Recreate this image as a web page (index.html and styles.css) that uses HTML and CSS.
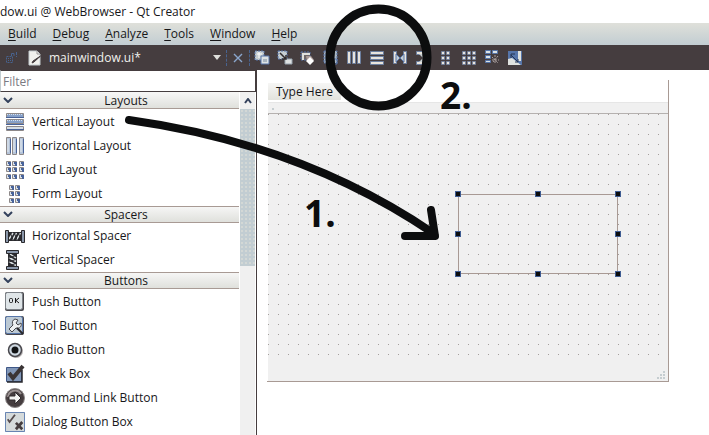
FILE: index.html
```html
<!DOCTYPE html>
<html lang="en">
<head>
<meta charset="utf-8">
<title>mainwindow.ui @ WebBrowser - Qt Creator</title>
<link rel="stylesheet" href="styles.css">
</head>
<body>
<div class="app">
  <header class="titlebar">dow.ui @ WebBrowser - Qt Creator</header>
  <nav class="menubar">
    <button><u>B</u>uild</button><button><u>D</u>ebug</button><button><u>A</u>nalyze</button><button><u>T</u>ools</button><button><u>W</u>indow</button><button><u>H</u>elp</button>
  </nav>
  <div class="toolbar">
    <button class="lock" aria-label="Lock"><svg width="14" height="14" viewBox="0 0 14 14" fill="none" stroke="#48638f"><rect x="1.500" y="5.500" width="6" height="6" stroke-dasharray="2 1"/><path d="M3 7.500h3M3 9.500h3" stroke-dasharray="1 1"/><path d="M6.500 5V2.500H9V5M11.500 1v3M11.500 5v1" /></svg></button>
    <svg class="file" width="14" height="16" viewBox="0 0 14 16"><path d="M1 1h8l3 3v11H1z" fill="#f1f1ed" stroke="#c5cdd0"/><path d="M9 1v3h3" fill="none" stroke="#9b9696"/><path d="M12.500 6L6 12l-2 1 1-2z" fill="#453d3f" stroke="#453d3f"/></svg>
    <select class="document" aria-label="Open document"><option>mainwindow.ui*</option></select>
    <svg class="caret" width="8" height="5" viewBox="0 0 8 5"><path d="M0 0h8L4 5z" fill="#dfe0dc"/></svg>
    <button class="close" aria-label="Close document"><svg width="10" height="10" viewBox="0 0 10 10"><path d="M1 1l8 8M9 1L1 9" stroke="#8aa6cc" stroke-width="1.400"/></svg></button>
    <div class="tools">
      <button aria-label="Edit widgets"><svg viewBox="0 0 16 16"><path d="M1 1h9v9H1z" fill="#c5cdd0" stroke="#5675a9" stroke-dasharray="2 1"/><path d="M3 4h5M5 2v6" stroke="#fff"/><path d="M7 6h8v8H7z" fill="#dce2e4" stroke="#5675a9"/><path d="M9 9h4v3H9z" fill="#a9b5c0"/></svg></button>
      <button aria-label="Edit signals"><svg viewBox="0 0 16 16"><path d="M1 1h9v8H1z" fill="#c5cdd0" stroke="#5675a9" stroke-dasharray="2 1"/><path d="M8 9h7v5H8z" fill="#dfe2e2" stroke="#97a3ae"/><path d="M3 3l6 6M9 5v4H5" fill="none" stroke="#302b2d" stroke-width="1.500"/></svg></button>
      <button aria-label="Edit buddies"><svg viewBox="0 0 16 16"><path d="M1 2h9v8H1z" fill="#6d6667" stroke="#5675a9" stroke-dasharray="2 1"/><path d="M2 4h8M3 3v7" stroke="#dfe0dc" stroke-width="2"/><path d="M6 6h5l3 4-4 4-3-3z" fill="#a89a98"/><path d="M10 7l4 4-4 4-4-4z" fill="#fff"/></svg></button>
      <button aria-label="Edit tab order"><svg viewBox="0 0 16 16"><path d="M1 1h13v12H1z" fill="#aab7c3" stroke="#5675a9" stroke-dasharray="2 1"/><path d="M3 3v8h8M11 9h3v5h-3z" fill="none" stroke="#5675a9"/></svg></button>
      <button aria-label="Lay out horizontally"><svg viewBox="0 0 16 16"><g fill="#e8e4dd" stroke="#6c7f9f"><path d="M1.500 1.500h3v12h-3zM6.500 1.500h3v12h-3zM11.500 1.500h3v12h-3z"/></g></svg></button>
      <button aria-label="Lay out vertically"><svg viewBox="0 0 16 16"><g fill="#e8e4dd" stroke="#6c7f9f"><path d="M1.500 1.500h13v3h-13zM1.500 6.500h13v3h-13zM1.500 11.500h13v3h-13z"/></g></svg></button>
      <button aria-label="Lay out horizontally in splitter"><svg viewBox="0 0 16 16"><path d="M1.500 1.500h3v12h-3zM11.500 1.500h3v12h-3z" fill="#e8e4dd" stroke="#6c7f9f"/><path d="M4 4l4 4-4 4zM12 4L8 8l4 4z" fill="#c5cdd0" stroke="#5675a9"/></svg></button>
      <button aria-label="Lay out vertically in splitter"><svg viewBox="0 0 16 16"><path d="M1.500 1.500h12v3h-12zM1.500 11.500h12v3h-12z" fill="#e8e4dd" stroke="#6c7f9f"/><path d="M4 4l4 4-4 4h8L8 8l4-4z" fill="#c5cdd0"/></svg></button>
      <button aria-label="Lay out in a form"><svg viewBox="0 0 16 16"><g fill="#e8e4dd" stroke="#6c7f9f" stroke-width=".8"><path d="M3.500 1.500h3v3h-3zM8.500 1.500h3v3h-3zM3.500 6.500h3v3h-3zM8.500 6.500h3v3h-3zM3.500 11.500h3v3h-3zM8.500 11.500h3v3h-3z"/></g></svg></button>
      <button aria-label="Lay out in a grid"><svg viewBox="0 0 16 16"><g fill="#e8e4dd" stroke="#6c7f9f" stroke-width=".8"><path d="M1.500 1.500h3v3h-3zM6.500 1.500h3v3h-3zM11.500 1.500h3v3h-3zM1.500 6.500h3v3h-3zM6.500 6.500h3v3h-3zM11.500 6.500h3v3h-3zM1.500 11.500h3v3h-3zM6.500 11.500h3v3h-3zM11.500 11.500h3v3h-3z"/></g></svg></button>
      <button aria-label="Break layout"><svg viewBox="0 0 16 16"><path d="M1.500.5h5v3h-5zM8.500.5h5v3h-5zM1.500 5.500h5v3h-5zM1.500 10.500h5v2h-5z" fill="#dce2e4" stroke="#5675a9"/><path d="M8 7l6 6M14 6l-5 6M8 10h7M11 5v8" stroke="#aaa09f" stroke-dasharray="2 1"/></svg></button>
      <button aria-label="Adjust size"><svg viewBox="0 0 16 16"><path d="M1 1h14v14H1z" fill="#5675a9"/><path d="M11 1h3v10h-3zM1 9l4-1 9 7H1z" fill="#dfe2df"/><path d="M4 5l7 7M4 8V4h4M11 9v3H8" stroke="#253452" fill="none"/></svg></button>
    </div>
  </div>
  <main class="workspace">
    <aside class="widgetbox">
      <input class="filter" type="text" placeholder="Filter" aria-label="Filter">
      <div class="scroller">
        <div class="list">
          <section>
            <h2><svg class="chev" viewBox="0 0 10 6"><path d="M1 1l4 4 4-4"/></svg>Layouts</h2>
            <ul>
              <li><svg viewBox="0 0 20 20"><g fill="#86a0c8" stroke="#8d8888"><path d="M1.500 1.500h17v4h-17z"/><path d="M1.500 7.500h17v4h-17z"/><path d="M1.500 14.500h17v4h-17z" fill="#d5dde5"/></g><path d="M2 2.500h16M2 8.500h16" stroke="#d8e1ea" stroke-dasharray="1 1"/><path d="M1 5.500h18M1 12.500h18M2 17.500h17" stroke="#48639a"/></svg>Vertical Layout</li>
              <li><svg viewBox="0 0 20 20"><g fill="#b5c4d9" stroke="#8d8888"><path d="M1.500 1.500h4v17h-4zM7.500 1.500h4v17h-4zM14.500 1.500h4v17h-4z"/></g><path d="M3 3v13M9 3v13M16 3v13" stroke="#e8eef2"/><path d="M5.500 3v14M11.500 3v14M18.500 3v14" stroke="#48639a"/></svg>Horizontal Layout</li>
              <li><svg viewBox="0 0 20 20"><g fill="#dbe3eb" stroke="#8d8888"><path id="r3" d="M1.500 1.500h4v4h-4zM7.500 1.500h4v4h-4zM14.500 1.500h4v4h-4z"/><use href="#r3" y="6"/><use href="#r3" y="13"/></g><g fill="#48639a"><path id="b3" d="M3 2h3v4H4V4H3zM9 2h3v4h-2V4H9zM16 2h3v4h-2V4h-1z"/><use href="#b3" y="6"/><use href="#b3" y="13"/></g></svg>Grid Layout</li>
              <li><svg viewBox="0 0 20 20"><g fill="#dbe3eb" stroke="#8d8888"><path id="r2" d="M4.500 1.500h4v4h-4zM10.500 1.500h4v4h-4z"/><use href="#r2" y="6"/><use href="#r2" y="13"/></g><g fill="#48639a"><path id="b2" d="M6 2h3v4H7V4H6zM12 2h3v4h-2V4h-1z"/><use href="#b2" y="6"/><use href="#b2" y="13"/></g></svg>Form Layout</li>
            </ul>
          </section>
          <section>
            <h2><svg class="chev" viewBox="0 0 10 6"><path d="M1 1l4 4 4-4"/></svg>Spacers</h2>
            <ul>
              <li><svg viewBox="0 0 20 20"><g id="spring"><path d="M3 6h14v9H3z" fill="#29292d"/><path d="M4 13l4-6M7.500 14l4-7M11.500 14l4-7" stroke="#dce2e4" stroke-width="1.500"/><path d="M5 6l3 8M9 6l3 8M13 6l3 8" stroke="#29292d"/><path d="M.5 4.500h3v12h-3zM16.500 4.500h3v12h-3z" fill="#8a97aa" stroke="#29292d"/></g></svg>Horizontal Spacer</li>
              <li><svg viewBox="0 0 20 20"><use href="#spring" transform="translate(-2 0) rotate(90 10 10)"/></svg>Vertical Spacer</li>
            </ul>
          </section>
          <section>
            <h2><svg class="chev" viewBox="0 0 10 6"><path d="M1 1l4 4 4-4"/></svg>Buttons</h2>
            <ul>
              <li><svg viewBox="0 0 20 20"><rect x="0" y="0" width="19" height="19" rx="2" fill="#48474c"/><rect x=".5" y=".5" width="17" height="17" rx="2" fill="#dfe5e8" stroke="#7c8187"/><rect x="4.500" y="6.500" width="3" height="4" rx="1" fill="none" stroke="#171719"/><path d="M10.500 6v5M14 6l-3 2.500L14 11" fill="none" stroke="#171719"/></svg>Push Button</li>
              <li><svg viewBox="0 0 20 20"><rect x="0" y="0" width="19" height="19" rx="2" fill="#48474c"/><rect x=".5" y=".5" width="17" height="17" rx="2" fill="#bcc9d4" stroke="#5675a9"/><path d="M10 3a4 4 0 0 0-2 6l-4 4 3 3 4-4c4 1 6-2 5-5l-3 2-2-2 2-3z" fill="#eef1f2" stroke="#48474c"/><path d="M12 12l6 6" stroke="#29292d" stroke-width="2"/></svg>Tool Button</li>
              <li><svg viewBox="0 0 20 20"><circle cx="11" cy="11" r="7" fill="#b5b0b0"/><circle cx="10" cy="10" r="6.500" fill="#cfd9e2" stroke="#48474c" stroke-width="1.500"/><circle cx="10" cy="10" r="3.500" fill="#111214"/></svg>Radio Button</li>
              <li><svg viewBox="0 0 20 20"><path d="M1.500 3.500h15v14h-15z" fill="#8197b8" stroke="#3e5787"/><path d="M2 18h15V6" fill="none" stroke="#28282c" stroke-width="1.500"/><path d="M4 9l4 5 10-12" fill="none" stroke="#3a3435" stroke-width="4"/></svg>Check Box</li>
              <li><svg viewBox="0 0 20 20"><circle cx="10" cy="10" r="9.500" fill="#453d3f" stroke="#8d8888"/><path d="M3 9a7 7 0 0 1 13-3" fill="none" stroke="#9b9292" stroke-width="2"/><path d="M4 8h6V4l6 6-6 6v-4H4z" fill="#f3f3f1" stroke="#302b2d"/></svg>Command Link Button</li>
              <li><svg viewBox="0 0 22 22"><path d="M.5.5h21v21H.5z" fill="#d5dadb" stroke="#5675a9"/><path d="M3 8l2 3 6-8" fill="none" stroke="#554b4d" stroke-width="2"/><path d="M12 12l7 7M19 11l-7 8" stroke="#453d3f" stroke-width="3"/></svg>Dialog Button Box</li>
            </ul>
          </section>
        </div>
        <div class="scrollbar">
          <button aria-label="Scroll up"><svg width="8" height="6" viewBox="0 0 8 6"><path d="M1 5l3-4 3 4" fill="none" stroke="#33415c" stroke-width="2"/></svg></button>
          <div class="thumb"></div>
        </div>
      </div>
    </aside>
    <div class="canvas">
      <div class="form">
        <div class="form-menu"><button>Type Here</button></div>
        <div class="form-toolbar"></div>
        <div class="form-body">
          <div class="selection"><i class="nw"></i><i class="n"></i><i class="ne"></i><i class="w"></i><i class="e"></i><i class="sw"></i><i class="s"></i><i class="se"></i></div>
        </div>
        <div class="form-status"><svg width="8" height="8" viewBox="0 0 8 8" fill="#c5cdd0"><path d="M6 0h2v2H6zM3 3h2v2H3zM6 3h2v2H6zM0 6h2v2H0zM3 6h2v2H3zM6 6h2v2H6z"/></svg></div>
      </div>
    </div>
  </main>
  <svg class="annotations" width="709" height="435" viewBox="0 0 709 435">
    <g fill="none" stroke="#0c0d0e" stroke-linecap="round" stroke-linejoin="round">
      <circle cx="378.500" cy="57.500" r="48.500" stroke-width="9"/>
      <path d="M129 120Q302 144 433 233" stroke-width="8"/>
      <path d="M431 210L435 236H405" stroke-width="8"/>
    </g>
    <text x="304" y="227">1.</text>
    <text x="440" y="109">2.</text>
  </svg>
</div>
</body>
</html>
```
FILE: styles.css
```css
* { box-sizing: border-box; }
body {
  margin: 0;
  background: #fff;
  color: #171719;
  font: 12px/16px "Open Sans", "Noto Sans", sans-serif;
  overflow: hidden;
}
button, input, select { font: inherit; color: inherit; margin: 0; padding: 0; border: 0; background: none; }
svg { display: block; flex: none; }

.app { position: relative; display: flex; flex-direction: column; height: 100vh; }
.titlebar { display: flex; height: 23px; flex: none; align-items: center; white-space: nowrap; }

.menubar {
  display: flex;
  flex: none;
  gap: 16px;
  height: 22px;
  padding: 0 8px;
  background: linear-gradient(#dfe0da, #c2cdd2);
}
.menubar u { text-underline-offset: 2px; }

.toolbar { display: flex; flex: none; align-items: center; height: 25px; background: #453d3f; color: #f1f1ed; }
.lock { width: 28px; padding-left: 5px; }
.document { appearance: none; flex: none; width: 165px; padding-left: 7px; }
.file { flex: none; }
.caret { margin-left: 6px; }
.document option { color: #171719; }
.close { display: flex; justify-content: center; width: 24px; margin-left: 5px; border: dashed #48638f; border-width: 0 1px; height: 16px; align-items: center; }
.tools { display: flex; }
.tools button { display: flex; justify-content: center; width: 23px; }
.tools svg { width: 16px; height: 16px; }

.workspace { display: flex; flex: 1; min-height: 0; }
.widgetbox { display: flex; flex-direction: column; flex: none; width: 257px; border-right: 1px solid #453d3f; }
.filter { flex: none; height: 22px; padding: 0 2px; border: 1px solid #453d3f; border-left-color: #c2cdd2; background: #fff; }
.filter::placeholder { color: #7b7a82; opacity: 1; }
.scroller { display: flex; flex: 1; min-height: 0; }
.list { flex: 1; overflow: hidden; }
h2 {
  position: relative;
  margin: 0 0 1px;
  padding-left: 13px;
  border: solid #a89a94;
  border-width: 1px 0;
  height: 17px;
  font: inherit;
  line-height: 15px;
  text-align: center;
  background: linear-gradient(#f6f6f5, #dfe0dc);
}
section:first-child h2 { border-top-color: #f6f6f5; }
.chev { position: absolute; left: 3px; top: 4px; width: 10px; height: 6px; fill: none; stroke: #33415c; stroke-width: 2; }
ul { list-style: none; margin: 0; padding: 0; }
li { display: flex; align-items: center; gap: 7px; height: 24px; padding-left: 5px; }
li svg { width: 20px; height: 20px; }

.scrollbar { width: 17px; flex: none; border: solid #fff; border-width: 0 1px; background: #f0f0f0; }
.scrollbar button { display: flex; width: 100%; height: 17px; align-items: center; justify-content: center; }
.thumb { height: 157px; background: radial-gradient(circle, #d3d8d6 0 1px, transparent 1px) 0 0 / 4px 4px #c2cdd2; }

.canvas { flex: 1; padding: 10px; overflow: hidden; }
.form { display: flex; flex-direction: column; width: 402px; height: 302px; border: solid #a89a94; border-width: 0 1px 1px 0; padding-left: 1px; background: #f0f0f0; background-clip: content-box; }
.form-menu { flex: none; height: 23px; padding-top: 3px; background: #fff; border-bottom: 1px solid #e6e6e6; }
.form-menu button { height: 17px; padding: 0 8px; background: linear-gradient(#f6f6f5, #e3e3dd); }
.form-toolbar { flex: none; height: 11px; padding: 5px 4px; border-bottom: 1px solid #b5b1af; }
.form-toolbar::before { content: ""; display: block; width: 2px; height: 2px; background: #c5cdd0; }
.form-body {
  position: relative;
  flex: none;
  height: 246px;
  background: conic-gradient(from 270deg at 1px 1px, #a39e9c 90deg, transparent 0) 0 0 / 10px 10px;
}
.selection { position: absolute; left: 190px; top: 80px; width: 160px; height: 80px; border: 1px solid #a89a94; }
.selection i { position: absolute; width: 6px; height: 6px; border: 1px solid #3e5c92; background: #0c0d0e; }
.nw, .w, .sw { left: -4px; }
.n, .s { left: 76px; }
.ne, .e, .se { right: -4px; }
.nw, .n, .ne { top: -4px; }
.w, .e { top: 36px; }
.sw, .s, .se { bottom: -4px; }
.form-status { display: flex; flex: 1; align-items: flex-end; justify-content: flex-end; padding: 2px 3px; }

.annotations { position: absolute; left: 0; top: 0; pointer-events: none; }
.annotations text { font: bold 37px "Open Sans", sans-serif; fill: #0c0d0e; }
```
